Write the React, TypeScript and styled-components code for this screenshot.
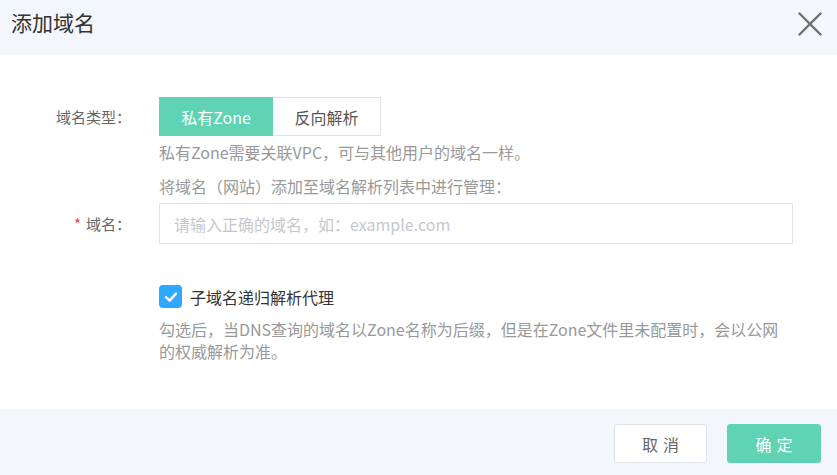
import React, { useState } from "react";
import styled, { createGlobalStyle } from "styled-components";

const Global = createGlobalStyle`
  html, body { margin: 0; padding: 0; background: #ffffff; }
  body { font-family: "Noto Sans CJK SC", "Noto Sans", sans-serif; }
  * { box-sizing: border-box; }
`;

const Dialog = styled.div`
  width: 837px;
  height: 475px;
  display: flex;
  flex-direction: column;
  background: #fff;
`;

const Header = styled.div`
  height: 55px;
  background: #f3f6fa;
  display: flex;
  align-items: flex-start;
  justify-content: space-between;
  padding: 7px 14px 0 11px;
`;

const Title = styled.h1`
  margin: 0;
  font-size: 21px;
  font-weight: 400;
  line-height: 30px;
  color: #333;
`;

const CloseBtn = styled.button`
  border: 0;
  background: transparent;
  padding: 0;
  margin-top: 4px;
  width: 26px;
  height: 26px;
  display: flex;
  align-items: center;
  justify-content: center;
  cursor: pointer;
`;

const Body = styled.div`
  flex: 1;
  padding-top: 42px;
  display: flex;
  flex-direction: column;
`;

const Row = styled.div<{ $mt?: number }>`
  display: flex;
  align-items: flex-start;
  margin-top: ${(p) => p.$mt ?? 0}px;
`;

const Label = styled.div<{ $h: number }>`
  width: 159px;
  padding-right: 28px;
  text-align: right;
  font-size: 15px;
  color: #666;
  line-height: ${(p) => p.$h}px;
  flex-shrink: 0;
`;

const Star = styled.span`
  color: #f04b4b;
  margin-right: 5px;
`;

const Content = styled.div`
  width: 634px;
  display: flex;
  flex-direction: column;
`;

const Segmented = styled.div`
  display: flex;
`;

const SegBtn = styled.button<{ $active?: boolean; $w: number }>`
  width: ${(p) => p.$w}px;
  height: 39px;
  font-family: inherit;
  font-size: 16px;
  padding: 0;
  border: 1px solid ${(p) => (p.$active ? "#5fd3b4" : "#dde3e9")};
  border-left-width: ${(p) => (p.$active ? 1 : 0)}px;
  background: ${(p) => (p.$active ? "#5fd3b4" : "#fff")};
  color: ${(p) => (p.$active ? "#fff" : "#555")};
  cursor: pointer;
`;

const Hint = styled.div<{ $mt: number }>`
  margin-top: ${(p) => p.$mt}px;
  font-size: 16px;
  line-height: 22px;
  color: #999;
`;

const Input = styled.input`
  width: 634px;
  height: 41px;
  border: 1px solid #dde3e9;
  border-radius: 1px;
  padding: 0 14px;
  font-family: inherit;
  font-size: 16px;
  color: #333;
  outline: none;
  &::placeholder { color: #c4c8cc; }
`;

const CheckRow = styled.label`
  display: flex;
  align-items: center;
  gap: 8px;
  cursor: pointer;
`;

const Box = styled.span<{ $on: boolean }>`
  width: 23px;
  height: 23px;
  border-radius: 4px;
  background: ${(p) => (p.$on ? "#2fa9ff" : "#fff")};
  border: ${(p) => (p.$on ? "none" : "1px solid #ccc")};
  display: flex;
  align-items: center;
  justify-content: center;
`;

const CheckText = styled.span`
  font-size: 16px;
  line-height: 22px;
  color: #333;
`;

const Footer = styled.div`
  height: 66px;
  background: #f3f6fa;
  display: flex;
  justify-content: flex-end;
  align-items: flex-start;
  gap: 20px;
  padding: 15px 16px 0 0;
`;

const FootBtn = styled.button<{ $primary?: boolean }>`
  width: ${(p) => (p.$primary ? 94 : 93)}px;
  height: 39px;
  border-radius: 3px;
  font-family: inherit;
  font-size: 16px;
  letter-spacing: 5px;
  text-indent: 5px;
  border: 1px solid ${(p) => (p.$primary ? "#5fd3b4" : "#dde3e9")};
  background: ${(p) => (p.$primary ? "#5fd3b4" : "#fff")};
  color: ${(p) => (p.$primary ? "#fff" : "#666")};
  cursor: pointer;
`;

export default function App() {
  const [type, setType] = useState<"private" | "reverse">("private");
  const [checked, setChecked] = useState(true);
  return (
    <>
      <Global />
      <Dialog>
        <Header>
          <Title>添加域名</Title>
          <CloseBtn aria-label="close">
            <svg width="24" height="24" viewBox="0 0 24 24">
              <path d="M1.5 1.5 L22.5 22.5 M22.5 1.5 L1.5 22.5" stroke="#6e6e6e" strokeWidth="2.4" strokeLinecap="round" />
            </svg>
          </CloseBtn>
        </Header>
        <Body>
          <Row>
            <Label $h={39}>域名类型：</Label>
            <Content>
              <Segmented>
                <SegBtn $w={114} $active={type === "private"} onClick={() => setType("private")}>私有Zone</SegBtn>
                <SegBtn $w={108} $active={type === "reverse"} onClick={() => setType("reverse")}>反向解析</SegBtn>
              </Segmented>
              <Hint $mt={5}>私有Zone需要关联VPC，可与其他用户的域名一样。</Hint>
              <Hint $mt={12}>将域名（网站）添加至域名解析列表中进行管理：</Hint>
            </Content>
          </Row>
          <Row $mt={6}>
            <Label $h={41}><Star>*</Star>域名：</Label>
            <Content>
              <Input placeholder="请输入正确的域名，如：example.com" />
            </Content>
          </Row>
          <Row $mt={41}>
            <Label $h={23} />
            <Content>
              <CheckRow onClick={() => setChecked(!checked)}>
                <Box $on={checked}>
                  {checked && (
                    <svg width="14" height="14" viewBox="0 0 14 14">
                      <path d="M2 7.2 L5.6 10.6 L12 3.6" fill="none" stroke="#fff" strokeWidth="2.4" strokeLinecap="round" strokeLinejoin="round" />
                    </svg>
                  )}
                </Box>
                <CheckText>子域名递归解析代理</CheckText>
              </CheckRow>
              <Hint $mt={10}>勾选后，当DNS查询的域名以Zone名称为后缀，但是在Zone文件里未配置时，会以公网的权威解析为准。</Hint>
            </Content>
          </Row>
        </Body>
        <Footer>
          <FootBtn>取消</FootBtn>
          <FootBtn $primary>确定</FootBtn>
        </Footer>
      </Dialog>
    </>
  );
}
